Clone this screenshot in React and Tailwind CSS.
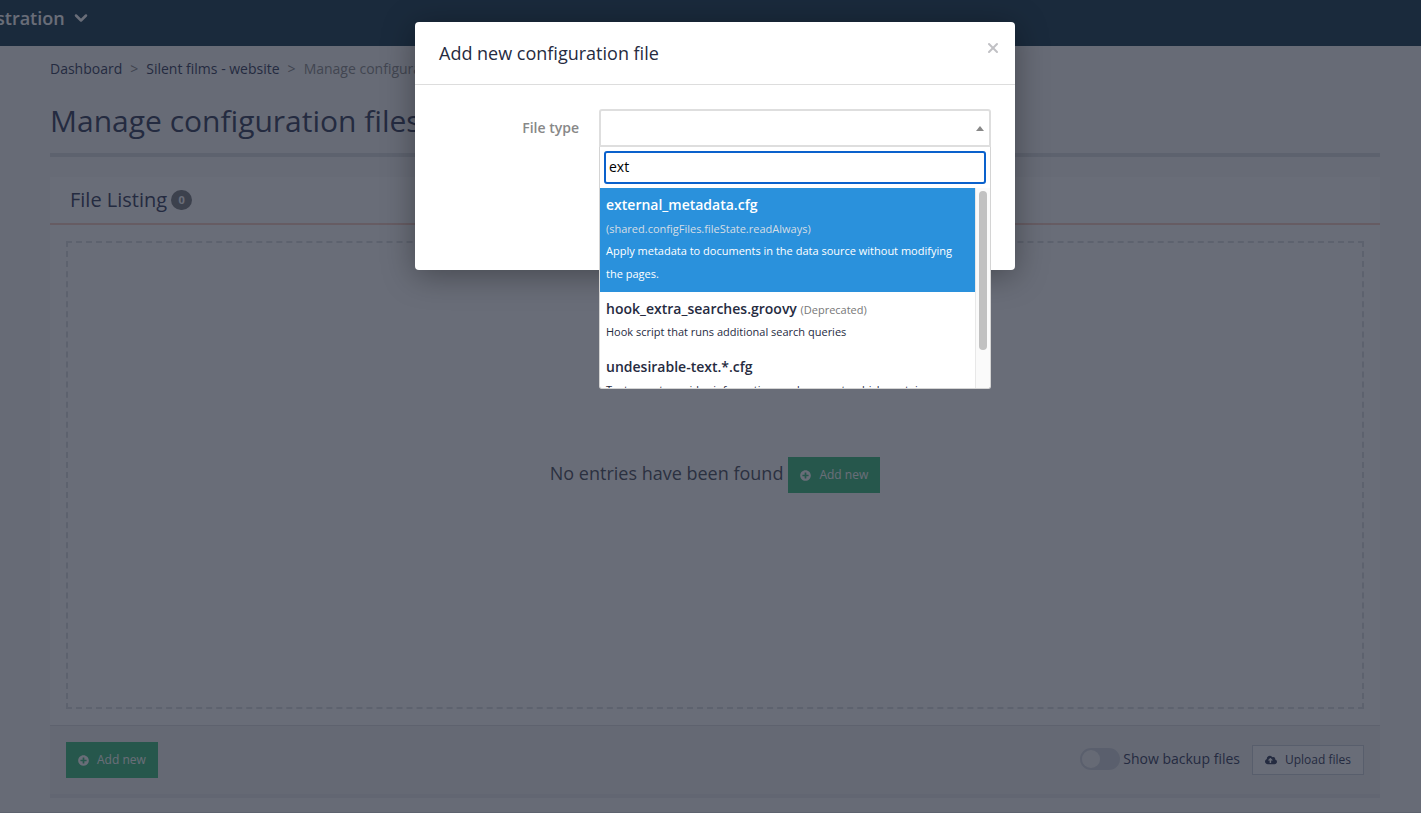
import React, { useState } from 'react';
import { FaPlusCircle, FaCloudUploadAlt } from 'react-icons/fa';
import { ChevronDown, X } from 'lucide-react';

const fileTypes = [
  {
    name: 'external_metadata.cfg',
    state: '(shared.configFiles.fileState.readAlways)',
    description: 'Apply metadata to documents in the data source without modifying the pages.',
  },
  {
    name: 'hook_extra_searches.groovy',
    state: '(Deprecated)',
    description: 'Hook script that runs additional search queries',
  },
  {
    name: 'undesirable-text.*.cfg',
    description: 'Text report provides information on documents which contain undesirable text.',
  },
];

const AddNewButton = () => (
  <button type="button" className="flex h-9 items-center gap-2 bg-[#3fc080] px-3 text-xs text-white">
    <FaPlusCircle className="size-[11px]" />
    Add new
  </button>
);

const FileTypeSelect = () => {
  const [search, setSearch] = useState('ext');
  const [active, setActive] = useState(0);

  const results = fileTypes.filter((type) => type.name.includes(search));

  return (
    <div className="relative flex-1">
      <button
        id="file-type"
        type="button"
        aria-haspopup="listbox"
        aria-expanded="true"
        className="flex h-[38px] w-full items-center justify-end rounded-t-[3px] border-2 border-[#dedede] px-[5px]"
      >
        <svg viewBox="0 0 8 5" className="h-[5px] w-2 fill-[#888888]">
          <path d="M4 0 8 5H0z" />
        </svg>
      </button>
      <div className="absolute inset-x-0 top-full rounded-b-[3px] border border-t-0 border-[#d4d4d4] bg-white">
        <div className="p-1">
          <input
            type="text"
            aria-label="Search file types"
            value={search}
            onChange={(e) => setSearch(e.target.value)}
            className="block h-[33px] w-full rounded-[3px] border-2 border-[#0a61cc] px-[3px] pb-0.5 text-sm text-black outline-none"
          />
        </div>
        <div className="flex h-[200px] overflow-hidden rounded-b-[3px]">
          <ul role="listbox" className="flex-1">
            {results.map((type, index) => (
              <li
                key={type.name}
                role="option"
                aria-selected={index === active}
                onMouseEnter={() => setActive(index)}
                className={
                  index === active
                    ? 'bg-[#2a91dc] pt-[5px] pr-3 pb-[7px] pl-[6px] text-white'
                    : 'pt-[5px] pr-3 pb-[7px] pl-[6px] text-[#262b3f]'
                }
              >
                <div className="text-sm/[23px]">
                  <span className="font-semibold">{type.name}</span>{' '}
                  {type.state && (
                    <span
                      className={
                        index === active ? 'text-[11px]/[16px] text-[#d5dde5]' : 'text-[11px]/[16px] text-[#777777]'
                      }
                    >
                      {type.state}
                    </span>
                  )}
                </div>
                <div className="text-[11px]/[23px]">{type.description}</div>
              </li>
            ))}
          </ul>
          {/* scrollbar */}
          <div className="w-[15px] border-l border-[#e8e8e8] bg-[#fafafa] px-[3px] pt-[3px]">
            <div className="h-[159px] rounded-full bg-[#c1c1c1]" />
          </div>
        </div>
      </div>
    </div>
  );
};

const App = () => {
  const [showBackups, setShowBackups] = useState(false);

  return (
    <div className="relative min-h-screen overflow-hidden bg-[#f9f9fa] font-['Open_Sans',sans-serif] text-sm text-[#3b4260]">
      <nav className="flex h-[46px] items-start bg-[#1d4055] pt-[6px] text-white">
        <button type="button" className="-ml-1 flex items-center gap-[6px] text-lg/[24px] font-semibold">
          stration
          <ChevronDown className="size-5" strokeWidth={3} />
        </button>
      </nav>

      <main className="pr-[41px] pl-[50px]">
        <div className="flex gap-2 pt-[13px] leading-5">
          <a href="#dashboard">Dashboard</a>
          <span className="text-[#8a8a8a]">&gt;</span>
          <a href="#website">Silent films - website</a>
          <span className="text-[#8a8a8a]">&gt;</span>
          <span className="text-[#8f8f8f]">Manage configuration files</span>
        </div>
        <h1 className="border-b-4 border-[#dcdee2] pt-[22px] pb-3 text-[30px]/[40px]">Manage configuration files</h1>

        <section className="mt-5 border-b-4 border-[#ececee] bg-white">
          <div className="flex h-12 items-center gap-1 border-b-2 border-[#f5cfc4] px-5">
            <h2 className="text-xl">File Listing</h2>
            <span className="flex h-5 w-[21px] items-center justify-center rounded-full bg-[#7f8084] text-[11px] font-bold text-white">
              0
            </span>
          </div>
          <div className="p-4">
            <div className="flex min-h-[468px] items-center justify-center gap-[5px] border-2 border-dashed border-[#dcdee2]">
              <p className="pb-1 text-lg text-[#4f535f]">No entries have been found</p>
              <AddNewButton />
            </div>
          </div>
          <div className="flex items-center justify-between border-t border-[#dfe0e3] bg-[#f3f3f4] p-4">
            <AddNewButton />
            <div className="flex items-center gap-3">
              <label className="flex items-center gap-[3px] pb-0.5">
                <input
                  type="checkbox"
                  checked={showBackups}
                  onChange={(e) => setShowBackups(e.target.checked)}
                  className="flex h-[22px] w-10 appearance-none items-center rounded-full border-2 border-[#d4d8de] bg-[#d4d8de] before:size-[18px] before:rounded-full before:bg-[#f6f6f7] checked:justify-end"
                />
                Show backup files
              </label>
              <button
                type="button"
                className="flex h-[30px] items-center gap-2 border border-[#cfd3dc] bg-white px-3 text-xs"
              >
                <FaCloudUploadAlt className="size-3" />
                Upload files
              </button>
            </div>
          </div>
        </section>
      </main>
      <footer className="mt-[14px] border-t border-[#dcdee2]" />

      {/* modal */}
      <div className="absolute inset-0 flex items-start justify-center bg-[#181f2f]/65 pt-[22px] pl-[9px]">
        <div
          role="dialog"
          aria-labelledby="modal-title"
          className="w-full max-w-[600px] rounded bg-white shadow-[0_5px_32px_rgba(0,0,0,0.35)]"
        >
          <div className="flex h-[63px] items-center justify-between border-b border-[#dddddd] px-6">
            <h3 id="modal-title" className="text-lg text-[#262b3f]">
              Add new configuration file
            </h3>
            <button type="button" aria-label="Close" className="-mr-[10px] mb-[10px] text-[#c0c0c4]">
              <X className="size-4" strokeWidth={3} />
            </button>
          </div>
          <div className="flex gap-5 px-6 pt-6 pb-[123px]">
            <label htmlFor="file-type" className="w-[140px] text-right leading-[38px] font-semibold text-[#888888]">
              File type
            </label>
            <FileTypeSelect />
          </div>
        </div>
      </div>
    </div>
  );
};

export default App;
